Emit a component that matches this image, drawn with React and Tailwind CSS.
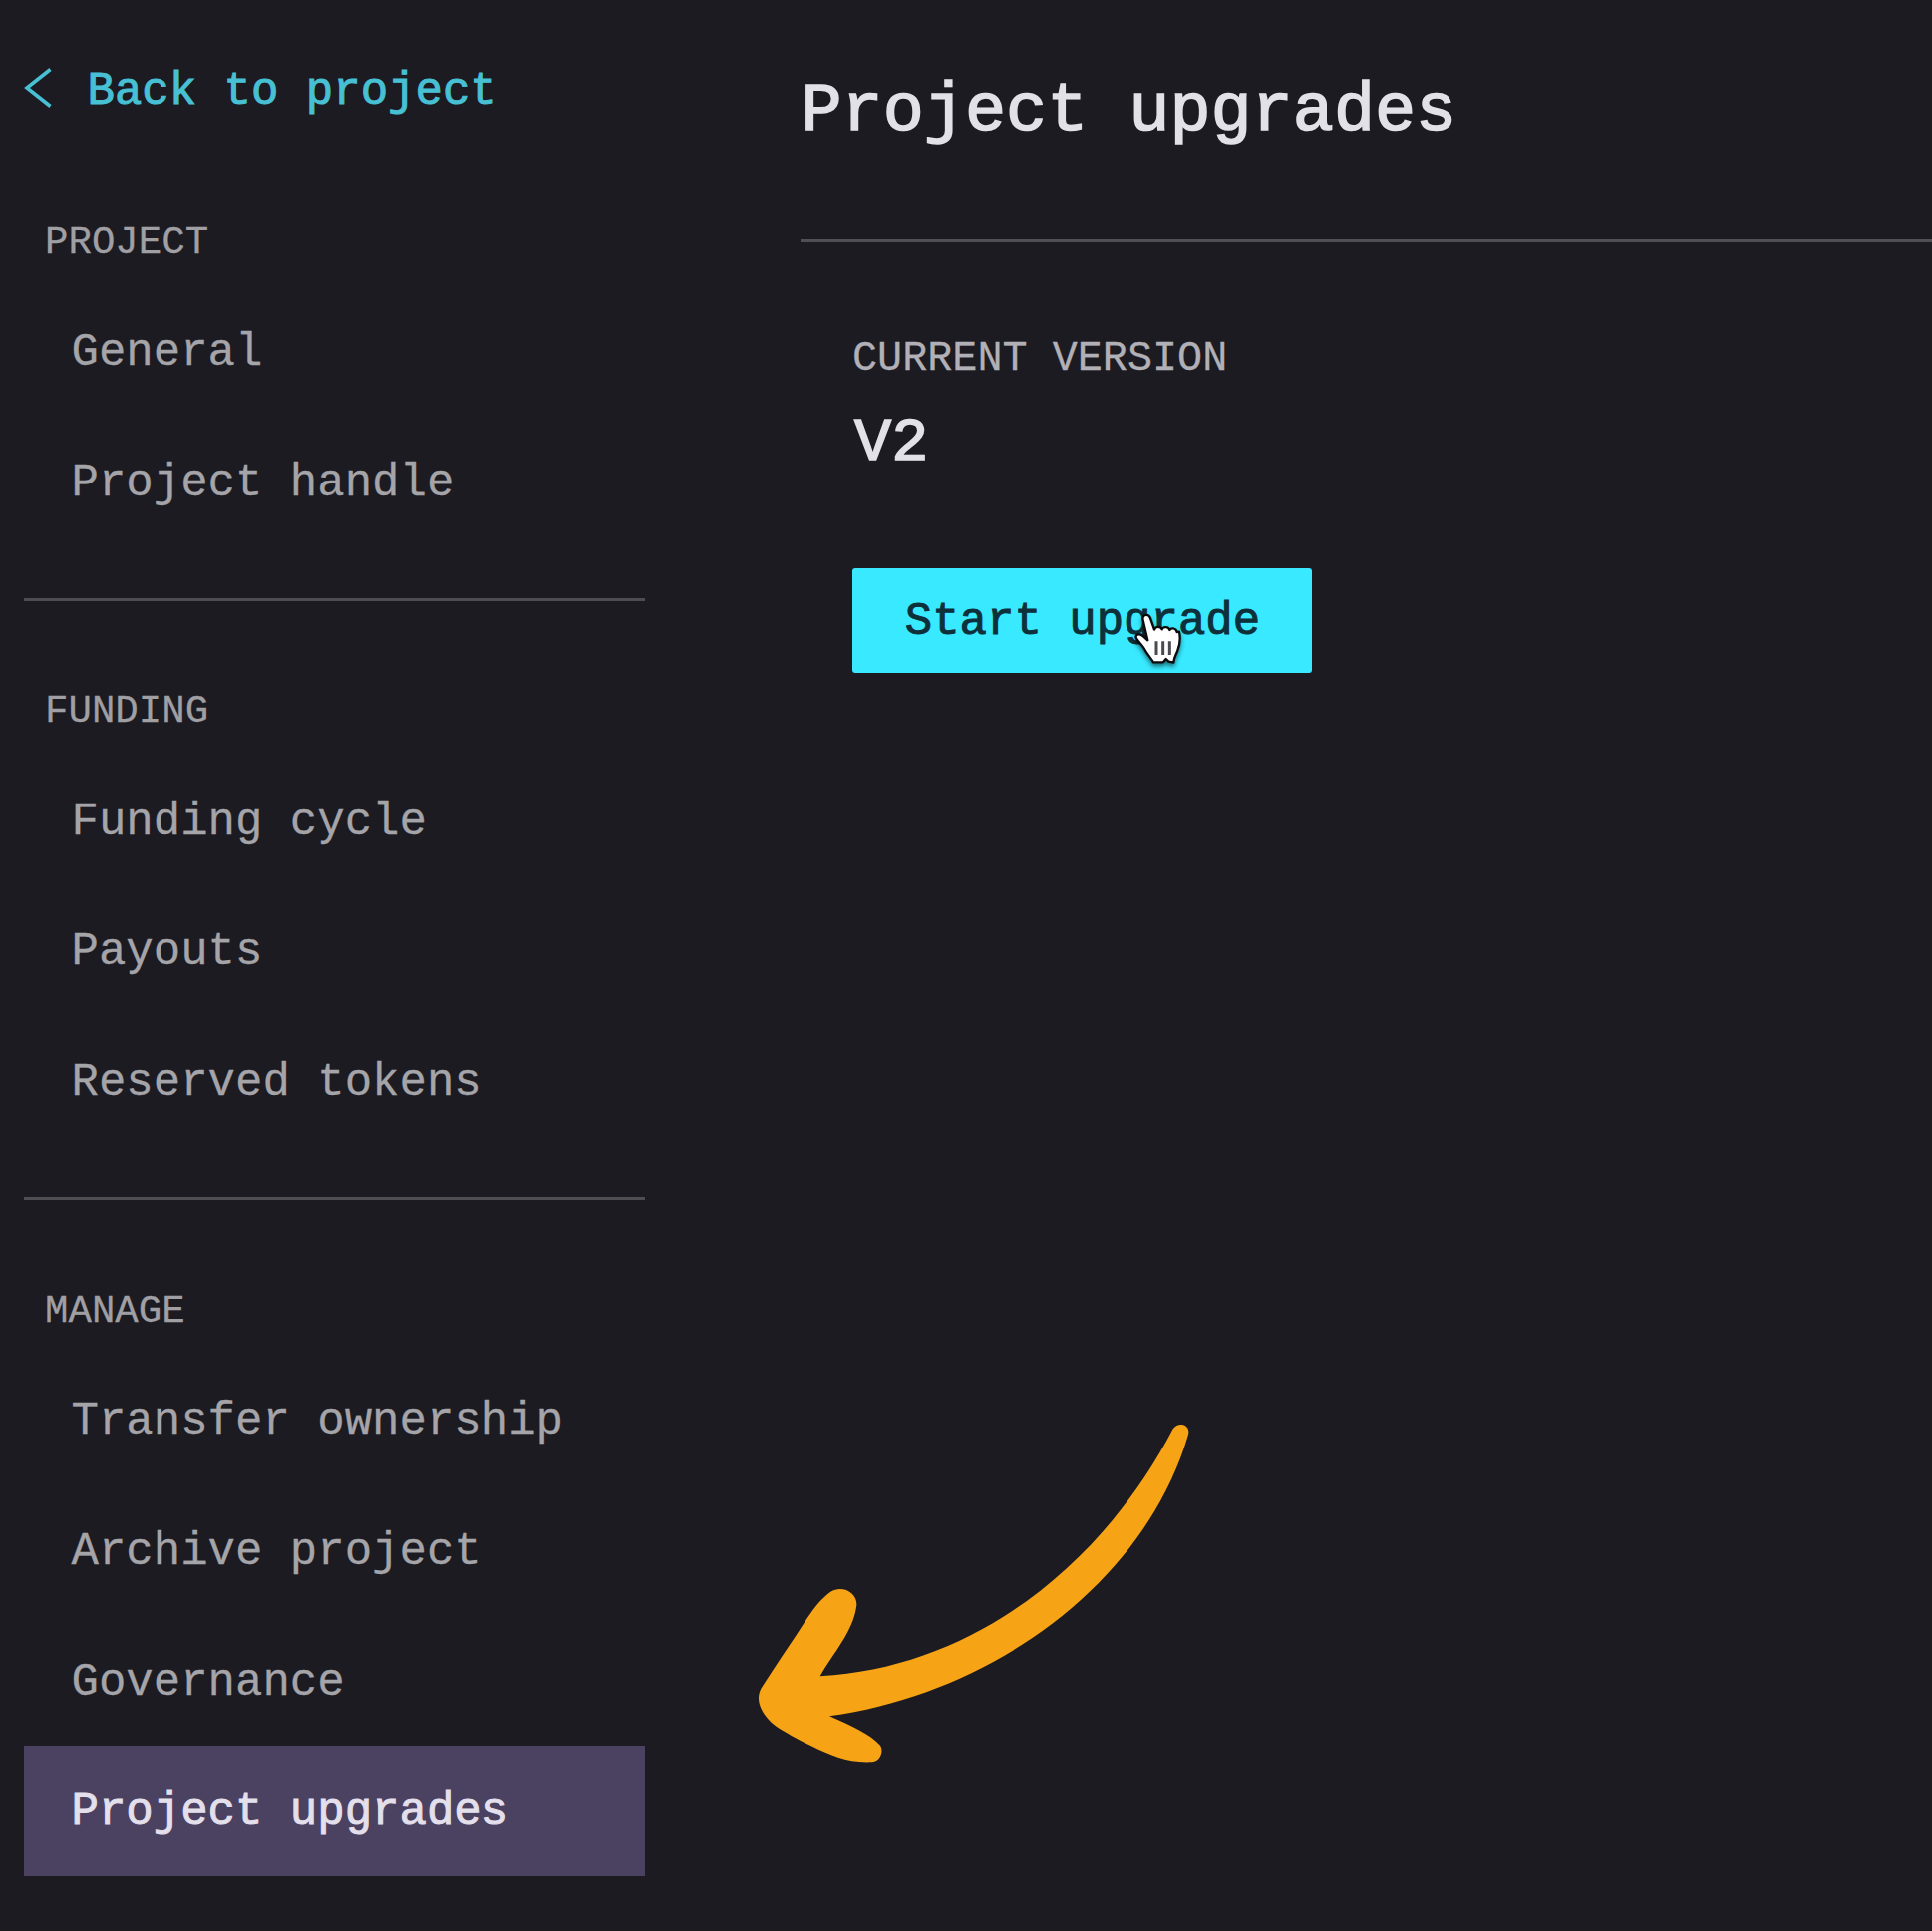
const SECTIONS = [
  { title: 'PROJECT', items: ['General', 'Project handle'] },
  { title: 'FUNDING', items: ['Funding cycle', 'Payouts', 'Reserved tokens'] },
  {
    title: 'MANAGE',
    items: ['Transfer ownership', 'Archive project', 'Governance', 'Project upgrades'],
  },
];

const ACTIVE = 'Project upgrades';

function NavItem({ label }) {
  const active = label === ACTIVE;
  return (
    <li
      className={
        active
          ? 'flex h-[130.7px] items-center bg-[#4a4260] pt-[4px] pl-[47.5px] text-[#e3dfeb] [-webkit-text-stroke:1px_#e3dfeb]'
          : 'flex h-[130.7px] items-center pt-[4px] pl-[47.5px] text-[#a5a4a9] [-webkit-text-stroke:0.3px_#a5a4a9]'
      }
    >
      <a className="whitespace-nowrap text-[45.7px] leading-[60px]">{label}</a>
    </li>
  );
}

function Sidebar() {
  return (
    <aside className="ml-6 w-[622.5px] shrink-0">
      <a className="mt-[59px] flex h-[60px] items-center text-[#48c0d4]">
        <svg className="h-[42px] w-[28px]" viewBox="0 0 28 42" fill="none">
          <path d="M26.5 1.5L3 20L26.5 38.5" stroke="currentColor" strokeWidth="3.6" />
        </svg>
        <span className="ml-[35.5px] pt-[6px] whitespace-nowrap text-[45.7px] leading-[60px] [-webkit-text-stroke:1px_#48c0d4]">
          Back to project
        </span>
      </a>
      <nav className="mt-[13px]">
        {SECTIONS.map((section, i) => (
          <section key={section.title}>
            {i > 0 && <hr className="mt-[52px] h-[3px] border-0 bg-[#4e4d52]" />}
            <h2 className="h-[154.5px] pt-[86.5px] pl-[21px] text-[39.1px] leading-[50px] text-[#a09fa4] [-webkit-text-stroke:0.3px_#a09fa4]">
              {section.title}
            </h2>
            <ul>
              {section.items.map((label) => (
                <NavItem key={label} label={label} />
              ))}
            </ul>
          </section>
        ))}
      </nav>
    </aside>
  );
}

function HandCursor() {
  return (
    <svg
      className="absolute top-[20px] left-[254px] h-[100px] w-[100px] drop-shadow-[0_3px_2px_rgba(0,0,0,0.5)]"
      viewBox="0 0 300 300"
    >
      <path
        d="M112 92C112 78 130 76 135 90L147 125C150 114 166 114 170 124C174 114 190 116 193 126C199 117 213 121 215 132L222 131C226 150 224 170 217 188C214 198 206 208 205 224L190 221L182 213L174 223H144C137 211 124 197 117 183C110 170 97 160 92 149C90 138 104 135 114 145L127 157Z"
        fill="#ffffff"
        stroke="#0b0b0d"
        strokeWidth="7"
        strokeLinejoin="round"
      />
      <path d="M153 160V201M173 160V201M193 160V201" stroke="#4a4b50" strokeWidth="9" />
    </svg>
  );
}

function Arrow() {
  return (
    <svg
      className="absolute top-[1400px] left-[740px] h-[400px] w-[480px]"
      viewBox="0 0 1440 1200"
    >
      <path
        d="M1310 100C1326 76 1364 86 1356 117C1228 555 780 893 276 964C345 995 396 1017 429 1052C441 1070 428 1102 403 1102C330 1105 282 1083 220 1053C176 1031 146 1015 116 995C78 967 48 920 71 880C114 811 165 740 209 670C234 632 255 608 280 590C316 567 366 595 357 637C345 713 290 771 248 844C723 817 1103 497 1310 100Z"
        fill="#f6a415"
      />
    </svg>
  );
}

function Content() {
  return (
    <main className="ml-[156.5px] flex-1">
      <h1 className="mt-[67px] pl-[0.5px] text-[68.5px] leading-[90px] text-[#e2e1e7] [-webkit-text-stroke:1.6px_#e2e1e7]">
        Project upgrades
      </h1>
      <hr className="mt-[83px] h-[3px] border-0 bg-[#504f56]" />
      <div className="ml-[52px] pt-[90px]">
        <p className="text-[41.8px] leading-[54px] text-[#b1b0b6] [-webkit-text-stroke:0.3px_#b1b0b6]">
          CURRENT VERSION
        </p>
        <p className="mt-[18px] pl-[2px] text-[62px] leading-[80px] text-[#e2e1e7] [-webkit-text-stroke:1.6px_#e2e1e7]">
          V2
        </p>
        <div className="relative mt-[84.5px] w-[461px]">
          <button className="flex h-[105px] w-[461px] items-center justify-center rounded-[3px] bg-[#38e9ff] pt-[4px] pl-[1px] text-[45.7px] leading-[60px] text-[#0e303a] [-webkit-text-stroke:1px_#0e303a]">
            Start upgrade
          </button>
          <HandCursor />
        </div>
      </div>
    </main>
  );
}

export default function App() {
  return (
    <div className="relative flex h-[1937px] w-[1938px] overflow-hidden bg-[#1c1b21] font-['Liberation_Mono',monospace]">
      <Sidebar />
      <Content />
      <Arrow />
    </div>
  );
}
